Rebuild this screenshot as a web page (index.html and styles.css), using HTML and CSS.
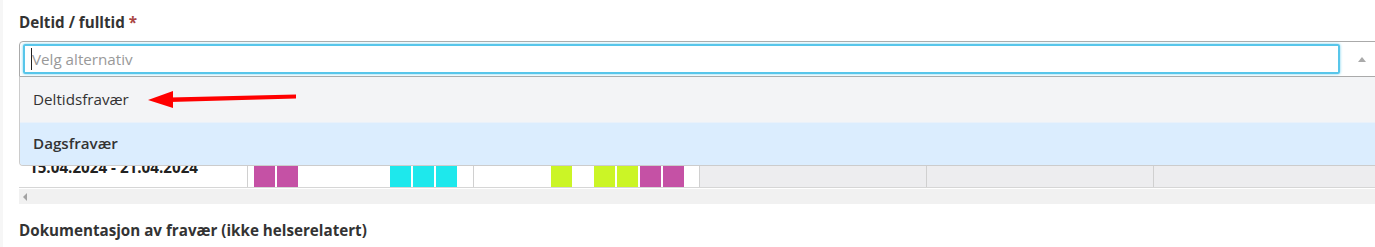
FILE: index.html
```html
<!DOCTYPE html>
<html lang="no">
<head>
<meta charset="utf-8">
<title>Deltid / fulltid</title>
<link rel="stylesheet" href="styles.css">
</head>
<body>
<div class="page">
  <div class="field">
    <label class="label">Deltid / fulltid <span class="req">*</span></label>
    <div class="select">
      <div class="search"><span class="caret"></span><span class="placeholder">Velg alternativ</span></div>
      <div class="arrow"><span class="tri"></span></div>
      <ul class="dropdown">
        <li class="opt">Deltidsfravær</li>
        <li class="opt active">Dagsfravær</li>
      </ul>
      <svg class="annot" width="170" height="30" viewBox="0 0 170 30">
        <polygon points="0,15 25,6 25,23" fill="#f00"/>
        <polygon points="22,12.5 148,9.5 148,13.5 22,17" fill="#f00"/>
      </svg>
    </div>
  </div>

  <div class="grid">
    <div class="row head">
      <div class="c-date"></div>
      <div class="week"></div>
      <div class="week"></div>
      <div class="week empty"></div>
      <div class="week empty"></div>
      <div class="week empty"></div>
    </div>
    <div class="row">
      <div class="c-date">15.04.2024 - 21.04.2024</div>
      <div class="week w1">
        <span class="d mag"></span><span class="d mag"></span>
        <span class="sp" style="width:88px"></span>
        <span class="d cya"></span><span class="d cya"></span><span class="d cya"></span>
      </div>
      <div class="week w2">
        <span class="d yel"></span>
        <span class="sp" style="width:18px"></span>
        <span class="d yel"></span><span class="d yel"></span>
        <span class="d mag"></span><span class="d mag"></span>
      </div>
      <div class="week empty"></div>
      <div class="week empty"></div>
      <div class="week empty"></div>
    </div>
    <div class="scrollbar"><span class="sl"></span><span class="sr"></span></div>
  </div>

  <h3 class="heading">Dokumentasjon av fravær (ikke helserelatert)</h3>
</div>
</body>
</html>
```
FILE: styles.css
```css
* { box-sizing: border-box; }
html, body { margin: 0; padding: 0; background: #fff; }
body {
  font-family: "Open Sans", "Noto Sans", sans-serif;
  font-size: 15.2px;
  color: #333;
  overflow: hidden;
  width: 1375px;
  height: 247px;
}
.page {
  padding: 12px 0 0 16px;
  border-left: 3px solid #f6f6f6;
  height: 247px;
  position: relative;
}
.field { position: relative; z-index: 2; }
.label {
  display: block;
  font-weight: 700;
  line-height: 20px;
  font-size: 15.2px;
  color: #333;
}
.req { color: #a94442; }
.select {
  position: relative;
  margin-top: 9px;
  margin-right: -6px;
  display: flex;
  height: 36px;
  border: 1px solid #aaa;
  border-radius: 4px 4px 0 0;
  padding: 2px 0 2px 3px;
  background: #fff;
}
.search {
  width: 1317px;
  flex: none;
  height: 30px;
  border: 2px solid #58c6ea;
  box-shadow: 0 0 3px #6fd0ef;
  border-radius: 2px;
  display: flex;
  align-items: center;
  padding-left: 6px;
}
.caret { width: 1px; height: 22px; background: #222; }
.placeholder { color: #999; line-height: 20px; }
.arrow { flex: 1; display: flex; align-items: center; padding-left: 18px; }
.tri {
  width: 0; height: 0;
  border-left: 4px solid transparent;
  border-right: 4px solid transparent;
  border-bottom: 5px solid #aaa;
}
.dropdown {
  position: absolute;
  left: -1px; right: -1px;
  top: calc(100% + 1px);
  margin: 0; padding: 0;
  list-style: none;
  border: 1px solid #ccc;
  border-top: none;
  border-radius: 0 0 4px 4px;
  overflow: hidden;
  background: #f3f4f6;
}
.opt {
  height: 45px;
  line-height: 45px;
  padding-left: 13px;
  color: #333;
}
.opt.active {
  height: 43px;
  line-height: 41px;
  background: #dbedfe;
  font-weight: 600;
  border-top: 1px solid #e9f1fa;
}
.annot { position: absolute; left: 128px; top: 43px; }

.grid { margin-top: 9px; width: 1372px; }
.row { display: flex; height: 60px; border-bottom: 1px solid #d6d6d6; }
.row + .row { height: 42px; }
.c-date {
  width: 229px;
  flex: none;
  border-right: 1px solid #d0d0d0;
  background: #fff;
  font-weight: 700;
  padding-left: 10px;
  padding-top: 11px;
  line-height: 20px;
  color: #222;
}
.week {
  width: 226px;
  flex: none;
  border-right: 1px solid #d0d0d0;
  background: #fff;
  display: flex;
  gap: 2px;
  align-items: stretch;
}
.week.empty { width: 227px; background: #ededef; }
.w1 { padding-left: 6px; }
.w2 { padding-left: 77px; }
.d { width: 21px; flex: none; }
.sp { flex: none; }
.mag { background: #c551a5; }
.cya { background: #1ee8ec; }
.yel { background: #cbf526; }
.scrollbar {
  margin-top: 1px;
  height: 15px;
  background: #f1f1f1;
  position: relative;
  width: 1358px;
}
.sl, .sr { position: absolute; top: 4px; width: 0; height: 0; border-top: 4px solid transparent; border-bottom: 4px solid transparent; }
.sl { left: 4px; border-right: 4px solid #a3a3a3; }
.sr { right: -2px; border-left: 4px solid #a3a3a3; }
.heading {
  margin: 16px 0 0;
  font-size: 15.2px;
  font-weight: 700;
  line-height: 20px;
  color: #333;
}
```
